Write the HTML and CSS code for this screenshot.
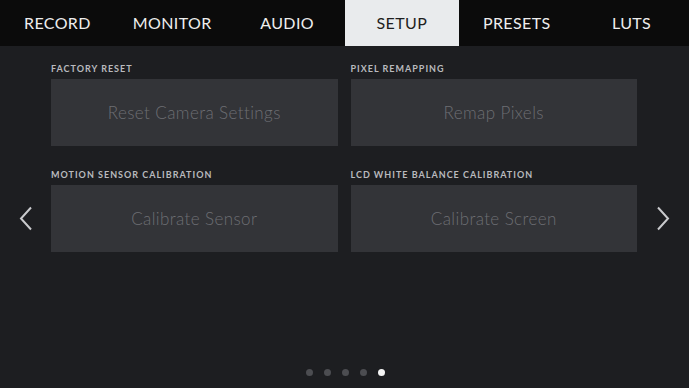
FILE: index.html
```html
<!DOCTYPE html>
<html lang="en">

<head>
  <meta charset="UTF-8">
  <title>Setup</title>
  <link rel="stylesheet" href="styles.css">
</head>

<body>
  <nav class="tabs">
    <div class="tab">RECORD</div>
    <div class="tab">MONITOR</div>
    <div class="tab">AUDIO</div>
    <div class="tab active">SETUP</div>
    <div class="tab">PRESETS</div>
    <div class="tab">LUTS</div>
  </nav>

  <main class="page">
    <div class="arrow">
      <svg width="14" height="26" viewBox="0 0 14 26">
        <polyline points="12,1.5 2,12.5 12,23.5" fill="none" stroke="#c9cacd" stroke-width="2" />
      </svg>
    </div>

    <div class="grid">
      <div class="item">
        <div class="label">FACTORY RESET</div>
        <button class="card">Reset Camera Settings</button>
      </div>
      <div class="item">
        <div class="label">PIXEL REMAPPING</div>
        <button class="card">Remap Pixels</button>
      </div>
      <div class="item">
        <div class="label">MOTION SENSOR CALIBRATION</div>
        <button class="card">Calibrate Sensor</button>
      </div>
      <div class="item">
        <div class="label">LCD WHITE BALANCE CALIBRATION</div>
        <button class="card">Calibrate Screen</button>
      </div>
    </div>

    <div class="arrow">
      <svg width="14" height="26" viewBox="0 0 14 26">
        <polyline points="2,1.5 12,12.5 2,23.5" fill="none" stroke="#c9cacd" stroke-width="2" />
      </svg>
    </div>
  </main>

  <div class="dots">
    <span class="dot"></span>
    <span class="dot"></span>
    <span class="dot"></span>
    <span class="dot"></span>
    <span class="dot on"></span>
  </div>
</body>

</html>
```

FILE: styles.css
```css
* {
  box-sizing: border-box;
}

body {
  margin: 0;
  width: 689px;
  height: 388px;
  overflow: hidden;
  background: #1d1e21;
  font-family: Lato, "Open Sans", sans-serif;
  display: flex;
  flex-direction: column;
}

.tabs {
  display: grid;
  grid-template-columns: repeat(6, 1fr);
  height: 46px;
  background: #0b0b0b;
}

.tab {
  display: flex;
  align-items: center;
  justify-content: center;
  color: #eeeeee;
  font-size: 16px;
  letter-spacing: 0.4px;
  padding-bottom: 1px;
}

.tab.active {
  background: #e9ebed;
  color: #1e1e20;
}

.page {
  display: flex;
  height: 307px;
}

.arrow {
  width: 51px;
  display: flex;
  align-items: flex-start;
  justify-content: center;
  padding-top: 160px;
}

.arrow:last-child {
  width: 52px;
}

.grid {
  flex: 1;
  display: grid;
  grid-template-columns: 1fr 1fr;
  column-gap: 13px;
  row-gap: 23px;
  padding-top: 17px;
  align-content: start;
}

.label {
  color: #b9babe;
  font-size: 9px;
  font-weight: 700;
  letter-spacing: 1px;
  line-height: 12px;
  height: 12px;
  margin-bottom: 4px;
}

.card {
  display: block;
  width: 100%;
  height: 67px;
  border: none;
  background: #333438;
  color: #6d6e73;
  font-family: Lato, "Open Sans", sans-serif;
  font-size: 17px;
  font-weight: 300;
  letter-spacing: 0.4px;
  padding: 0;
}

.dots {
  display: flex;
  justify-content: center;
  gap: 11px;
  padding-left: 1px;
  margin-top: 16px;
}

.dot {
  width: 7px;
  height: 7px;
  border-radius: 50%;
  background: #4c4d51;
}

.dot.on {
  background: #f4f4f4;
}
```
